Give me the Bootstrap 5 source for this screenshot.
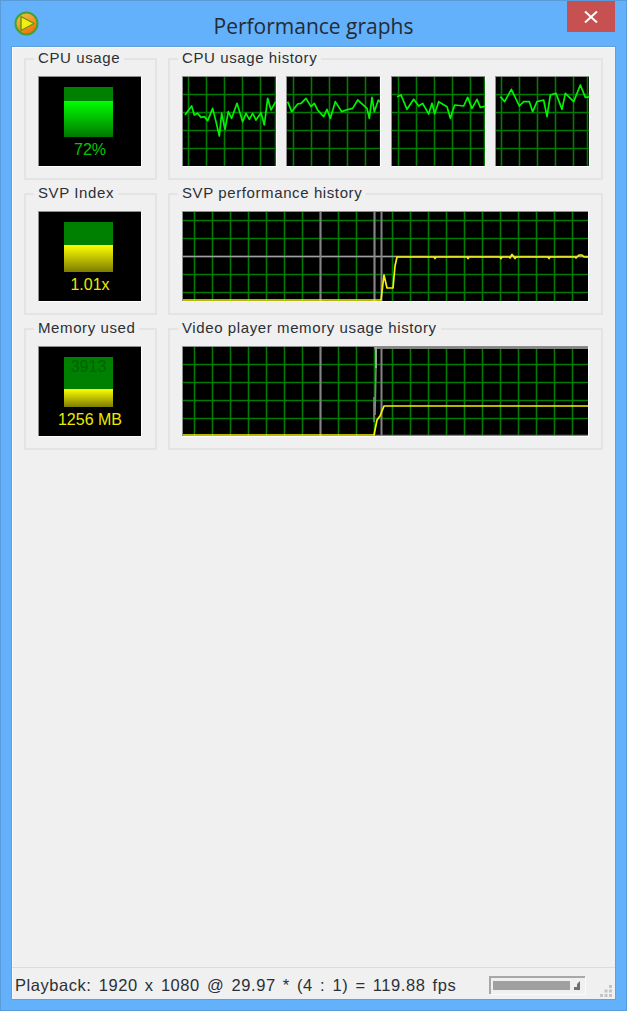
<!DOCTYPE html>
<html lang="en">

<head>
    <meta charset="UTF-8" />
    <meta name="viewport" content="width=device-width, initial-scale=1.0" />
    <title>Performance graphs</title>
    <link href="https://cdn.jsdelivr.net/npm/bootstrap@5.3.2/dist/css/bootstrap.min.css" rel="stylesheet">
    <style>
        html, body {
            height: 100%;
        }

        body {
            background-color: #63b0fb;
            font-family: "Liberation Sans", Arial, sans-serif;
        }

        .app-window {
            height: 1011px;
            border: 1px solid #5b9bd8;
            border-top-color: #5a9ad6;
        }

        .title-bar {
            height: 46px;
            flex: none;
        }

        .title-side {
            width: 60px;
            flex: none;
        }

        .title-text {
            font-family: "Open Sans", "Noto Sans", sans-serif;
            font-size: 21px;
            line-height: 46px;
            color: #232b35;
            padding-top: 2px;
        }

        .app-icon {
            margin: 10px 0 0 13px;
        }

        .close-btn {
            width: 48px;
            height: 31px;
            margin-right: 11px;
            background-color: #c75050;
        }

        .client-area {
            width: 603px;
            margin-left: 11px;
            height: 952px;
            background-color: #f0f0f0;
            box-shadow: 0 0 0 1px #5f9fdc, inset 1px 1px 0 #fbfbfb;
        }

        .graph-grid {
            display: grid;
            grid-template-columns: 133px 435px;
            grid-auto-rows: 122px;
            column-gap: 11px;
            row-gap: 13px;
            padding: 11px 12px 0;
        }

        .group-box {
            border: 2px solid #e4e4e4;
            padding: 0 12px;
        }

        .group-label {
            display: table;
            margin: -11px 0 0 -4px;
            padding: 0 4px;
            height: 18px;
            line-height: 18px;
            font-size: 15px;
            letter-spacing: 0.6px;
            color: #2b2f36;
            background-color: #f0f0f0;
            white-space: nowrap;
        }

        .graph-body {
            margin-top: 9px;
            height: 90px;
        }

        .sunken {
            border-top: 1px solid #8e8e8e;
            border-left: 1px solid #8e8e8e;
            box-shadow: 1px 1px 0 #fff;
            background-color: #000;
        }

        .meter {
            width: 103px;
            height: 90px;
            padding-top: 10px;
        }

        .meter-bar {
            width: 49px;
            height: 50px;
            margin-left: 25px;
            background-color: #008000;
            overflow: hidden;
        }

        .meter-fill-green {
            background: linear-gradient(#00ff00, #007800);
        }

        .meter-fill-yellow {
            background: linear-gradient(#ffff00, #7c7c00);
        }

        .meter-limit {
            font-size: 16px;
            line-height: 18px;
            color: #006400;
            text-align: center;
            margin-top: 1px;
        }

        .meter-value {
            font-size: 16px;
            line-height: 18px;
            margin-top: 4px;
            text-align: center;
        }

        .value-green {
            color: #00c800;
        }

        .value-yellow {
            color: #eaea00;
        }

        .history-svg {
            display: block;
        }

        .status-row {
            border-top: 1px solid #dcdcdc;
            height: 32px;
            flex: none;
        }

        .status-text {
            font-size: 16.5px;
            letter-spacing: 0.55px;
            word-spacing: 2.1px;
            line-height: 34px;
            color: #2b2f36;
            margin-left: 3px;
            white-space: nowrap;
        }

        .status-meter {
            width: 96px;
            height: 18px;
            margin: 8px 0 0 auto;
            border-top: 2px solid #a8a8a8;
            border-left: 2px solid #a8a8a8;
            box-shadow: 1px 1px 0 #fafafa;
            padding: 3px 0 0 2px;
        }

        .status-meter-bar {
            width: 77px;
            height: 9px;
            background-color: #a0a0a0;
        }

        .status-grip {
            margin: 16px 3px 0 15px;
            flex: none;
        }
    </style>
</head>

<body>
    <div class="app-window d-flex flex-column">
        <div class="title-bar d-flex">
            <div class="title-side">
                <svg class="app-icon" width="25" height="25" viewBox="0 0 25 25">
                    <defs>
                        <linearGradient id="discFill" x1="0.2" y1="0" x2="0.8" y2="1">
                            <stop offset="0" stop-color="#f5c04a" />
                            <stop offset="1" stop-color="#f06a0a" />
                        </linearGradient>
                    </defs>
                    <circle cx="12.5" cy="12.5" r="11" fill="url(#discFill)" stroke="#3fa52e" stroke-width="2" />
                    <path d="M7 5.5 L20 12.5 L7 19.5 Z" fill="#f2ee10" stroke="#5c9a16" stroke-width="1.4" stroke-linejoin="round" />
                </svg>
            </div>
            <div class="title-text flex-fill text-center">Performance graphs</div>
            <div class="title-side d-flex justify-content-end">
                <div class="close-btn d-flex align-items-center justify-content-center">
                    <svg width="14" height="12" viewBox="0 0 14 12">
                        <path d="M1 0.5 L13 11.5 M13 0.5 L1 11.5" stroke="#fff" stroke-width="2" />
                    </svg>
                </div>
            </div>
        </div>

        <div class="client-area d-flex flex-column">
            <div class="graph-grid flex-fill align-content-start">
                <div class="group-box">
                    <div class="group-label">CPU usage</div>
                    <div class="graph-body sunken meter">
                        <div class="meter-bar d-flex flex-column justify-content-end">
                            <div class="meter-fill-green" style="height:72%"></div>
                        </div>
                        <div class="meter-value value-green">72%</div>
                    </div>
                </div>
                <div class="group-box">
                    <div class="group-label">CPU usage history</div>
                    <div class="graph-body d-flex justify-content-between" id="cpuHistory"></div>
                </div>

                <div class="group-box">
                    <div class="group-label">SVP Index</div>
                    <div class="graph-body sunken meter">
                        <div class="meter-bar d-flex flex-column justify-content-end">
                            <div class="meter-fill-yellow" style="height:54%"></div>
                        </div>
                        <div class="meter-value value-yellow">1.01x</div>
                    </div>
                </div>
                <div class="group-box">
                    <div class="group-label">SVP performance history</div>
                    <div class="graph-body" id="svpHistory"></div>
                </div>

                <div class="group-box">
                    <div class="group-label">Memory used</div>
                    <div class="graph-body sunken meter">
                        <div class="meter-bar d-flex flex-column justify-content-between">
                            <div class="meter-limit">3913</div>
                            <div class="meter-fill-yellow" style="height:36%"></div>
                        </div>
                        <div class="meter-value value-yellow">1256 MB</div>
                    </div>
                </div>
                <div class="group-box">
                    <div class="group-label">Video player memory usage history</div>
                    <div class="graph-body" id="memHistory"></div>
                </div>
            </div>

            <div class="status-row d-flex">
                <div class="status-text">Playback: 1920 x 1080 @ 29.97 * (4 : 1) = 119.88 fps</div>
                <div class="status-meter d-flex">
                    <div class="status-meter-bar"></div>
                    <svg class="ms-1" width="6" height="9" viewBox="0 0 6 9">
                        <path d="M6 0 V9 H0 V6 H3 V3 Z" fill="#707070" />
                    </svg>
                </div>
                <svg class="status-grip" width="12" height="13" viewBox="0 0 12 13" fill="#c4c4c4">
                    <rect x="9" y="1" width="3" height="3" />
                    <rect x="9" y="5.5" width="3" height="3" />
                    <rect x="9" y="10" width="3" height="3" />
                    <rect x="4.5" y="5.5" width="3" height="3" />
                    <rect x="4.5" y="10" width="3" height="3" />
                    <rect x="0" y="10" width="3" height="3" />
                </svg>
            </div>
        </div>
    </div>

    <script>
        const GRID = '#007c00';
        const GRAY = '#848484';

        // zoom-crop coordinates (3x), turned back to pixels inside each graph
        function fromZoom(list, left) {
            return list.map(p => [(p[0] + left) / 3, p[1] / 3 - 77]);
        }

        function line(x1, y1, x2, y2, color, width) {
            return `<line x1="${x1}" y1="${y1}" x2="${x2}" y2="${y2}" stroke="${color}" stroke-width="${width || 1.6}"/>`;
        }

        function buildGraph(opts) {
            let out = '';
            opts.cols.forEach(x => { out += line(x + 0.5, 0, x + 0.5, opts.h, GRID); });
            opts.rows.forEach(y => { out += line(0, y + 0.5, opts.w, y + 0.5, GRID); });
            out += opts.extra || '';
            const pts = opts.points.map(p => p.join(',')).join(' ');
            out += `<polyline points="${pts}" fill="none" stroke="${opts.color}" stroke-width="${opts.stroke}" stroke-linejoin="round"/>`;
            return `<svg class="history-svg sunken" width="${opts.w + 1}" height="${opts.h + 1}" viewBox="0 0 ${opts.w} ${opts.h}">${out}</svg>`;
        }

        const cpu = [
            { cols: [5, 23, 41, 59, 77, 92], points: [[552,345],[572,318],[580,345],[590,340],[600,352],[610,350],[620,362],[635,325],[645,365],[655,408],[662,340],[672,388],[682,335],[692,355],[708,310],[725,365],[735,340],[745,358],[755,340],[765,360],[780,338],[790,375],[800,295],[810,330],[824,305]], left: -546 },
            { cols: [6, 24, 42, 60, 78, 93], points: [[860,305],[872,335],[890,312],[900,310],[915,295],[930,320],[940,310],[950,330],[968,350],[978,328],[988,355],[1003,305],[1022,335],[1035,330],[1055,325],[1070,300],[1098,325],[1105,355],[1113,292],[1120,335],[1132,300],[1143,312]], left: -858 },
            { cols: [6, 24, 42, 60, 78, 92], points: [[1185,290],[1197,285],[1215,328],[1235,298],[1250,318],[1262,310],[1280,342],[1290,310],[1298,342],[1310,305],[1335,320],[1345,355],[1358,315],[1385,318],[1397,292],[1410,325],[1425,298],[1435,322],[1453,318]], left: -1170 },
            { cols: [5, 23, 41, 59, 77, 91], points: [[1495,290],[1508,305],[1528,268],[1552,318],[1565,305],[1582,305],[1592,335],[1605,305],[1625,300],[1635,350],[1645,285],[1662,280],[1680,328],[1690,280],[1715,305],[1735,255],[1750,292],[1765,290]], left: -1482 }
        ];
        document.getElementById('cpuHistory').innerHTML = cpu.map(g => buildGraph({
            w: 93, h: 89, cols: g.cols, rows: [17, 35, 53, 71],
            points: fromZoom(g.points, g.left), color: '#00f400', stroke: 1.7
        })).join('');

        const wideCols = [];
        for (let x = 11; x < 406; x += 18) wideCols.push(x);

        // graph origin is (183, 212) for SVP and (183, 347) for memory
        const svpLine = [[0,88],[198,88],[201,63],[204,76],[210,76],[212,54],[214,45],[251,45],[252,46.5],[253,45],[284,45],[285,46.5],[286,45],[317,45],[318,46.5],[319,45],[326,45],[327,46],[329,42.5],[331,45],[332,46.5],[333,45],[365,45],[366,46.5],[367,45],[392,45],[393,46],[396,43],[399,43],[401,45],[405,45]];
        const svpGray = line(0, 44.5, 405, 44.5, '#a0a0a0') + line(137.5, 0, 137.5, 89, GRAY, 2) + line(191.5, 0, 191.5, 89, GRAY, 2) + line(198.5, 0, 198.5, 89, GRAY, 2);
        document.getElementById('svpHistory').innerHTML = buildGraph({
            w: 405, h: 89, cols: wideCols, rows: [8, 26, 44, 62, 80],
            points: svpLine, color: '#f4f400', stroke: 1.7, extra: svpGray
        });

        const memLine = [[0,88],[191,88],[194,73],[197,69],[201,59],[405,59]];
        const memGray = line(137.5, 0, 137.5, 89, GRAY, 2) + line(198.5, 0, 198.5, 89, GRAY, 2) + line(191, 0.5, 405, 0.5, GRAY, 3)
            + line(193, 0, 193, 21, '#a0a0a0', 2) + line(193, 21, 192, 68, GRAY) + line(191, 50, 191, 75, GRAY) + line(191, 88.5, 405, 88.5, GRAY);
        document.getElementById('memHistory').innerHTML = buildGraph({
            w: 405, h: 89, cols: wideCols, rows: [17, 35, 53, 71],
            points: memLine, color: '#f4f400', stroke: 1.7, extra: memGray
        });
    </script>
    <script src="https://cdn.jsdelivr.net/npm/bootstrap@5.3.2/dist/js/bootstrap.bundle.min.js"></script>
</body>

</html>
